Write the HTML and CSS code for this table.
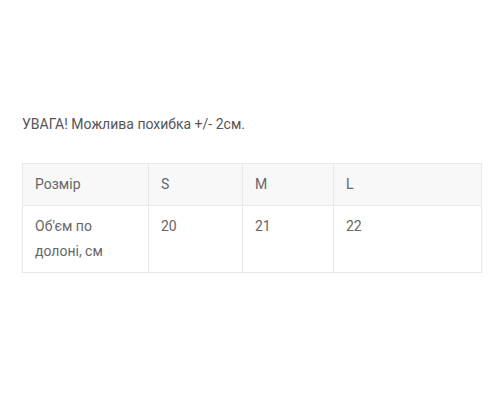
FILE: index.html
```html
<!DOCTYPE html>
<html lang="uk">
<head>
<meta charset="utf-8">
<title>Розмір</title>
<link rel="stylesheet" href="styles.css">
</head>
<body>
<div class="page">
  <p class="note">УВАГА! Можлива похибка +/- 2см.</p>
  <table class="sizes">
    <colgroup>
      <col class="c1"><col class="c2"><col class="c3"><col class="c4">
    </colgroup>
    <thead>
      <tr><th>Розмір</th><th>S</th><th>M</th><th>L</th></tr>
    </thead>
    <tbody>
      <tr><td>Об'єм по долоні, см</td><td>20</td><td>21</td><td>22</td></tr>
    </tbody>
  </table>
</div>
</body>
</html>
```
FILE: styles.css
```css
html, body {
  margin: 0;
  background: #fff;
}
.page {
  padding: 112px 20px 0 22px;
  font-family: Roboto, "Liberation Sans", sans-serif;
  font-size: 14px;
  color: #666;
}
.note {
  margin: 0 0 27px 0;
  line-height: 24px;
  color: #555;
}
.sizes {
  border-collapse: collapse;
  table-layout: fixed;
  width: 459px;
}
.c1 { width: 126px; }
.c2 { width: 94px; }
.c3 { width: 91px; }
.c4 { width: 148px; }
.sizes th, .sizes td {
  border: 1px solid #e8e8e8;
  padding: 8px 12px;
  text-align: left;
  vertical-align: top;
  font-weight: 400;
  line-height: 25px;
}
.sizes thead th {
  background: #f8f8f8;
}
```
